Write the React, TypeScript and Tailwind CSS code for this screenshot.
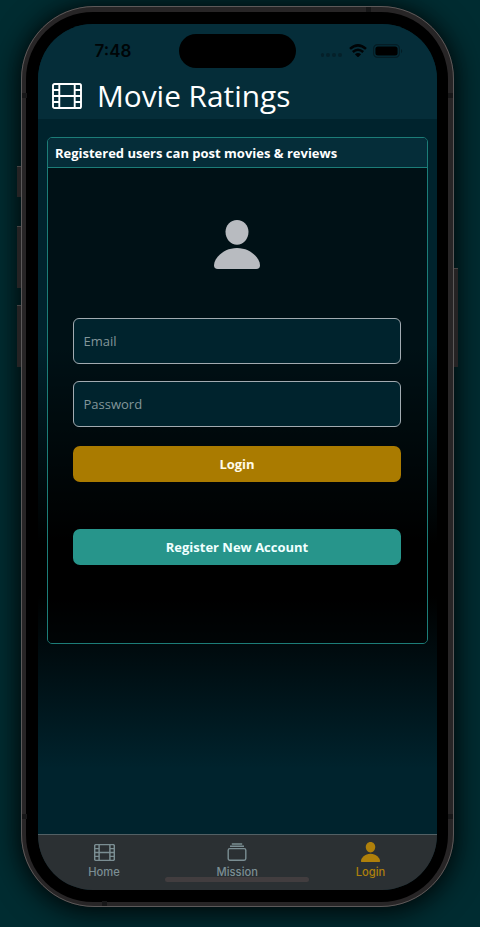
import React from 'react';

const Film = ({ className, sw }: { className: string; sw: number }) => (
  <svg className={className} viewBox="0 0 30 26" fill="none" stroke="currentColor" strokeWidth={sw} preserveAspectRatio="none">
    <rect x="1" y="1" width="28" height="24" rx="1.6" />
    <path d="M7.3 1V25M22.7 1V25M7.3 13H22.7M1 7H7.3M1 13H7.3M1 19H7.3M22.7 7H29M22.7 13H29M22.7 19H29" />
  </svg>
);

const Person = ({ className }: { className: string }) => (
  <svg className={className} viewBox="0 0 46 49" fill="currentColor" preserveAspectRatio="none">
    <path d="M23 0C29.5 0 34.5 5.2 34.5 11.8C34.5 19 29.4 24.8 23 24.8S11.5 19 11.5 11.8C11.5 5.2 16.5 0 23 0Z" />
    <path d="M23 28C36.5 28 46 38.2 46 45.2C46 47.8 44.8 49 42.2 49H3.8C1.2 49 0 47.8 0 45.2C0 38.2 9.5 28 23 28Z" />
  </svg>
);

const Stack = ({ className }: { className: string }) => (
  <svg className={className} viewBox="0 0 20 18" fill="none" stroke="currentColor" strokeWidth="1.4">
    <rect x="1.2" y="5.6" width="17.6" height="11.6" rx="1.6" />
    <path d="M3 3.2H17M4.8 1H15.2" />
  </svg>
);

const StatusBar = () => (
  <div className="relative flex h-[52px] shrink-0 items-center pt-[2px]">
    <span className="ml-[57px] mt-[1px] w-[80px] font-['Inter',sans-serif] text-[17px] font-semibold leading-none text-[#000507]">7:48</span>
    <div className="absolute left-[141px] top-[10px] h-[34.5px] w-[117px] rounded-full bg-black" />
    <div className="ml-auto mr-[34px] flex items-center">
      <div className="mr-[7px] mt-[9px] flex gap-[2.2px]">
        {[0, 1, 2, 3].map((i) => (
          <i key={i} className="size-[3.6px] rounded-full bg-[#05202a]" />
        ))}
      </div>
      <svg className="h-[13.5px] w-[18px]" viewBox="0 0 18 13.5" fill="none" stroke="#000406" strokeWidth="2.5">
        <path d="M1 4.9Q9-2.2 17 4.9M3.8 8Q9 3.4 14.2 8" />
        <path d="M9 13.4L5.9 10.3Q9 7.7 12.1 10.3Z" fill="#000406" stroke="none" />
      </svg>
      <svg className="ml-[6.5px] h-[14px] w-[30px]" viewBox="0 0 30 14">
        <rect x=".6" y=".6" width="25.8" height="12.8" rx="4" fill="none" stroke="#051d25" strokeWidth="1.2" />
        <rect x="2.4" y="2.4" width="22.2" height="9.2" rx="2.5" fill="#000" />
        <path d="M28 4.7Q30.4 7 28 9.3Z" fill="#051d25" />
      </svg>
    </div>
  </div>
);

export default function App() {
  return (
    <div className="h-[927px] w-[480px] overflow-hidden bg-[#002c31] pl-[20.5px] pt-[6px] font-['Open_Sans',sans-serif]">
      <div className="relative h-[901px] w-[433px] rounded-[73px] bg-[#272526] shadow-[0_4px_28px_4px_rgba(0,0,0,0.7),0_0_14px_rgba(0,0,0,0.3)]">
        <i className="absolute -left-[4px] top-[160px] h-[31px] w-[5px] border-t border-[#454343] bg-[#252324]" />
        <i className="absolute -left-[4px] top-[220px] h-[62px] w-[5px] border-t border-[#454343] bg-[#252324]" />
        <i className="absolute -left-[4px] top-[299px] h-[62px] w-[5px] border-t border-[#454343] bg-[#252324]" />
        <i className="absolute -right-[4px] top-[262px] h-[99px] w-[5px] border-t border-[#454343] bg-[#252324]" />
        <div className="relative h-full rounded-[73px] border-[1.5px] border-[#5c5959] bg-[#272526] p-[4.5px]">
          <i className="absolute left-0 top-[86px] h-[5px] w-[5px] bg-[#171718]" />
          <i className="absolute right-0 top-[86px] h-[5px] w-[5px] bg-[#171718]" />
          <i className="absolute left-0 top-[807px] h-[5px] w-[5px] bg-[#171718]" />
          <i className="absolute right-0 top-[807px] h-[5px] w-[5px] bg-[#171718]" />
          <i className="absolute right-[82px] top-0 h-[5px] w-[5px] bg-[#171718]" />
          <i className="absolute bottom-0 left-[80px] h-[5px] w-[5px] bg-[#171718]" />
          <div className="h-full rounded-[67px] bg-black pb-[12px] pl-[11.5px] pr-[11px] pt-[12px]">
            <div className="flex h-full flex-col overflow-hidden rounded-[55px] bg-[linear-gradient(180deg,#00232d_0%,#00232d_37%,#000_60%,#000_66%,#00232d_86%,#00232d_100%)]">
              <header className="h-[95px] shrink-0 bg-[#052d39]">
                <StatusBar />
                <div className="flex items-center pl-[14.5px] text-white">
                  <Film className="mt-[1px] h-[26px] w-[30px]" sw={1.9} />
                  <h1 className="ml-[15px] text-[29.8px] leading-[39px]">Movie Ratings</h1>
                </div>
              </header>
              <main className="flex-1 px-[9px] pt-[18.5px]">
                <section className="h-[507px] overflow-hidden rounded-[5px] border-[1.3px] border-[#1c7d78]">
                  <h2 className="h-[30px] border-b-[1.3px] border-[#1c7d78] bg-[#052d39] pl-[7.4px] text-[13px] font-bold leading-[30px] text-white">Registered users can post movies &amp; reviews</h2>
                  <div className="flex h-[476px] flex-col bg-black/50 pl-[25.5px] pr-[26px] pt-[51.5px]">
                    <Person className="h-[49px] w-[46px] shrink-0 self-center text-[#b8bbc0]" />
                    <input placeholder="Email" className="mt-[49px] h-[46.5px] w-full shrink-0 rounded-[6px] border border-[#a2abb1] bg-[#00232d] px-[9.5px] text-[13px] text-white placeholder:text-[#83969a]" />
                    <input placeholder="Password" type="password" className="mt-[16.5px] h-[46.5px] w-full shrink-0 rounded-[6px] border border-[#a2abb1] bg-[#00232d] px-[9.5px] text-[13px] text-white placeholder:text-[#83969a]" />
                    <button className="mt-[18.5px] h-[36.5px] shrink-0 rounded-[7px] bg-[#aa7b00] pt-[1px] text-[13px] font-bold text-[#fffbe9]">Login</button>
                    <button className="mt-[46.5px] h-[36.5px] shrink-0 rounded-[7px] bg-[#27958b] pt-[1px] text-[13px] font-bold text-[#f0ffff]">Register New Account</button>
                  </div>
                </section>
              </main>
              <nav className="relative grid h-[56px] shrink-0 grid-cols-3 border-t border-[#526064] bg-[#2b3033] font-['Inter',sans-serif] text-[11.2px] font-medium leading-[14px] text-[#7b8e93]">
                <i className="absolute bottom-[7.5px] left-[127.5px] h-[5px] w-[144px] rounded-full bg-[#423d3f]" />
                <a className="relative flex flex-col items-center pt-[9px]"><Film className="h-[17px] w-[21px]" sw={2.1} /><span className="mt-[4.5px]">Home</span></a>
                <a className="relative flex flex-col items-center pt-[8px]"><Stack className="h-[18px] w-[20px]" /><span className="mt-[4.5px]">Mission</span></a>
                <a className="relative flex flex-col items-center pt-[7px] text-[#af800b]"><Person className="h-[20.5px] w-[19px]" /><span className="mt-[3px]">Login</span></a>
              </nav>
            </div>
          </div>
        </div>
      </div>
    </div>
  );
}
